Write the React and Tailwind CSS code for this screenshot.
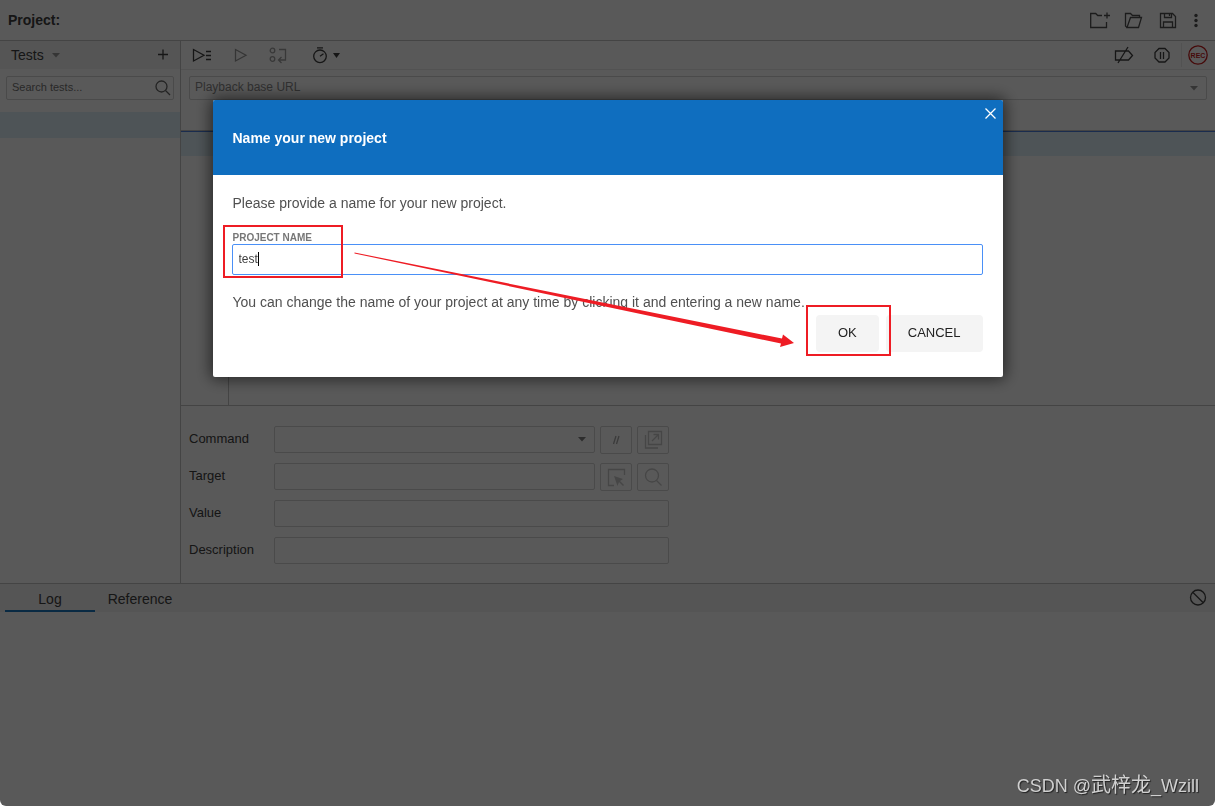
import { useState } from "react";

const FONT = "font-['Liberation_Sans','Noto_Sans_CJK_SC',sans-serif]";

function Icon({ w = 20, h = 20, className = "", children }) {
  return (
    <svg
      width={w}
      height={h}
      viewBox={`0 0 ${w} ${h}`}
      fill="none"
      stroke="currentColor"
      strokeWidth="1.3"
      className={`block shrink-0 ${className}`}
      aria-hidden="true"
    >
      {children}
    </svg>
  );
}

function IconButton({ label, className = "", children }) {
  return (
    <button type="button" aria-label={label} className={`flex shrink-0 items-center justify-center ${className}`}>
      {children}
    </button>
  );
}

function Caret({ className = "" }) {
  return (
    <Icon w={8} h={5} className={className}>
      <path d="M0 0h8L4 4.5z" fill="currentColor" stroke="none" />
    </Icon>
  );
}

function SearchIcon({ className = "" }) {
  return (
    <Icon w={18} h={18} className={className}>
      <circle cx="8.5" cy="7.5" r="5.5" />
      <path d="M12.5 11.500l4.500 4.500" />
    </Icon>
  );
}

function ProjectHeader() {
  return (
    <header className="flex h-[41px] shrink-0 items-center border-b border-[#c4c4c4] pl-2 pr-[9px]">
      <h1 className="flex-1 text-sm font-bold text-[#404040]">Project:</h1>
      <div className="flex items-center text-[#505050]">
        <IconButton label="Create new project" className="w-5">
          <Icon>
            <path d="M16.500 12v5.500H0.700v-14h5l2 2H12" />
            <path d="M14 5.500h6M17 2.500v6" />
          </Icon>
        </IconButton>
        <IconButton label="Open project" className="ml-[14px] w-5">
          <Icon>
            <path d="M3 17.500L1.500 16V3.500h5l2 2h7v2" />
            <path d="M3 17.500h11.500l3-10H6.500z" />
          </Icon>
        </IconButton>
        <IconButton label="Save project" className="ml-[14px] w-5">
          <Icon>
            <path d="M2.500 3.500h12l3 3v11h-15z" />
            <path d="M6.500 3.500v4h7v-4M11.500 4v2M5.500 17.500v-5.500h9v5.500" />
          </Icon>
        </IconButton>
        <IconButton label="More options" className="ml-2 w-5">
          <Icon>
            <g fill="currentColor" stroke="none">
              <circle cx="10" cy="5.500" r="1.700" />
              <circle cx="10" cy="10.500" r="1.700" />
              <circle cx="10" cy="15.500" r="1.700" />
            </g>
          </Icon>
        </IconButton>
      </div>
    </header>
  );
}

function Sidebar() {
  return (
    <aside className="flex w-[181px] shrink-0 flex-col border-r border-[#c4c4c4]">
      <div className="flex h-7 items-center bg-[#f2f2f2] pl-[11px] pr-2">
        <button type="button" className="flex items-center gap-2 text-sm text-[#404040]">
          Tests
          <Caret className="text-[#999]" />
        </button>
        <IconButton label="Add new test" className="ml-auto text-[#404040]">
          <Icon w={18} h={18}>
            <path d="M4 8.500h10M9 3.500v10" />
          </Icon>
        </IconButton>
      </div>
      <label className="mx-[6px] mt-[7px] flex h-6 items-center rounded-xs border border-[#d4d4d4] pl-[5px] pr-[2px]">
        <input
          type="text"
          aria-label="Search tests"
          placeholder="Search tests..."
          className="min-w-0 flex-1 pb-[2px] text-[11px] outline-none placeholder:text-[#757575]"
        />
        <SearchIcon className="text-[#666]" />
      </label>
      <div className="mt-3 h-[26px] bg-[#dff0f8]" />
    </aside>
  );
}

function Toolbar() {
  return (
    <div className="flex h-[29px] shrink-0 items-center border-b border-[#ececec] pl-[11px] pr-[7px] text-[#404040]">
      <IconButton label="Run all tests">
        <Icon>
          <path d="M1.500 4.500v11.500l10.500-5.700z" />
          <path d="M14 6.500h5M14 10.500h5M14 14.500h5" />
        </Icon>
      </IconButton>
      <IconButton label="Run current test" className="ml-[22px] text-[#999]">
        <Icon w={14}>
          <path d="M1.500 4.500v11.500l10.500-5.700z" />
        </Icon>
      </IconButton>
      <IconButton label="Step over" className="ml-[21px] text-[#a0a0a0]">
        <Icon>
          <circle cx="3.500" cy="5.500" r="2.300" />
          <circle cx="3.500" cy="14" r="2.300" />
          <path d="M10 4.500h6.500v10.500H10M12.500 12l-3 3 3 3" />
        </Icon>
      </IconButton>
      <button type="button" aria-label="Test execution speed" className="ml-[22px] flex items-center">
        <Icon>
          <circle cx="9" cy="11.300" r="6.300" />
          <path d="M6 2.800h6M9 11.300l3.500-2.500" />
        </Icon>
        <Icon w={7} h={5} className="ml-[2px]">
          <path d="M0 0h7L3.500 5z" fill="currentColor" stroke="none" />
        </Icon>
      </button>

      <IconButton label="Disable breakpoints" className="ml-auto">
        <Icon>
          <path d="M1.500 6h13l4 4.500-4 4.500h-13zM14 2L4 18" />
        </Icon>
      </IconButton>
      <IconButton label="Pause on exceptions" className="ml-[18px]">
        <Icon>
          <path d="M7 3.500h6l4 4v5.500l-4 4H7l-4-4V7.500z" />
          <path d="M8.500 7v7M11.500 7v7" />
        </Icon>
      </IconButton>
      <IconButton label="Start recording" className="ml-[9px] h-6 border-l border-[#eaeaea] pl-[6px]">
        <Icon className="text-[#c81e1e]">
          <circle cx="10" cy="10" r="9.200" />
          <text
            x="10"
            y="12.500"
            textAnchor="middle"
            fontSize="7"
            fontWeight="bold"
            fill="currentColor"
            stroke="none"
          >
            REC
          </text>
        </Icon>
      </IconButton>
    </div>
  );
}

function FieldRow({ label, id, children }) {
  return (
    <div className="flex h-[27px] w-[480px] max-w-full items-start">
      <label htmlFor={id} className="w-[85px] shrink-0 pt-[5px] text-[13px] leading-4 text-[#404040]">
        {label}
      </label>
      {children}
    </div>
  );
}

const fieldBox = "h-[27px] min-w-0 flex-1 rounded-xs border border-[#d4d4d4] bg-white px-2 text-xs outline-none";
const smallButton = "ml-[5px] h-7 w-8 rounded-xs border border-[#d4d4d4] text-[#c8c8c8]";

function CommandForm() {
  return (
    <form className="flex h-[178px] shrink-0 flex-col gap-[10px] border-t border-[#c4c4c4] pl-2 pt-5">
      <FieldRow label="Command" id="command">
        <div className="relative flex min-w-0 flex-1">
          <select id="command" className={`${fieldBox} appearance-none`} defaultValue="">
            <option value="" />
          </select>
          <Caret className="pointer-events-none absolute right-[9px] top-[11px] text-[#808080]" />
        </div>
        <IconButton label="Enable or disable command" className={smallButton}>
          <Icon className="text-[#a8a8a8]">
            <path d="M10 6L7.500 14M13 6l-2.500 8" />
          </Icon>
        </IconButton>
        <IconButton label="Add new window configuration" className={smallButton}>
          <Icon>
            <path d="M5.500 1.500h13v13h-13zM2.500 5v13H15" />
            <path d="M9 11l6.500-6.500M10.500 4.500h5v5" />
          </Icon>
        </IconButton>
      </FieldRow>
      <FieldRow label="Target" id="target">
        <input id="target" type="text" className={fieldBox} />
        <IconButton label="Select target in page" className={smallButton}>
          <Icon>
            <path d="M8 18.500H2.500v-16h16V8" />
            <path d="M8 9l9 3-3 2 4 4-1 1-4-4-1.500 4z" fill="currentColor" stroke="none" />
          </Icon>
        </IconButton>
        <IconButton label="Find target in page" className={smallButton}>
          <Icon>
            <circle cx="9" cy="8.500" r="6.500" />
            <path d="M13.500 13.500l5 5" />
          </Icon>
        </IconButton>
      </FieldRow>
      <FieldRow label="Value" id="value">
        <input id="value" type="text" className={fieldBox} />
      </FieldRow>
      <FieldRow label="Description" id="description">
        <input id="description" type="text" className={fieldBox} />
      </FieldRow>
    </form>
  );
}

function Editor() {
  return (
    <main className="flex min-w-0 flex-1 flex-col">
      <Toolbar />
      <div className="mx-2 mt-[6px] flex h-6 shrink-0 items-center rounded-xs border border-[#d4d4d4] pl-[5px] pr-2">
        <input
          type="text"
          aria-label="Playback base URL"
          placeholder="Playback base URL"
          className="min-w-0 flex-1 pb-[2px] text-xs outline-none placeholder:text-[#8a8a8a]"
        />
        <Caret className="text-[#999]" />
      </div>
      <div className="mt-[30px] h-[2px] shrink-0 border-t border-[#c4c4c4] bg-[#4a7fe0]" />
      <div className="h-6 shrink-0 bg-[#dff0f8]" />
      <div className="flex flex-1">
        <div className="w-12 border-r border-[#c4c4c4]" />
      </div>
      <CommandForm />
    </main>
  );
}

function Console() {
  return (
    <section className="min-h-[223px] shrink-0 border-t border-[#c4c4c4]">
      <div className="flex h-7 items-stretch bg-[#f2f2f2] pl-[5px] pr-2 text-sm text-[#404040]">
        <button type="button" className="w-[90px] border-b-2 border-[#1c78c0] pt-1">
          Log
        </button>
        <button type="button" className="w-[90px] border-b-2 border-transparent pt-1">
          Reference
        </button>
        <IconButton label="Clear log" className="ml-auto">
          <Icon w={18} h={18}>
            <circle cx="9" cy="8.500" r="7.500" />
            <path d="M4 3.500l10 10" />
          </Icon>
        </IconButton>
      </div>
    </section>
  );
}

function Annotations() {
  return (
    <>
      <div className="pointer-events-none absolute left-[10px] top-[125px] h-[53px] w-[120px] border-2 border-[#ee1c24]" />
      <div className="pointer-events-none absolute left-[593px] top-[205px] h-[51px] w-[85px] border-2 border-[#ee1c24]" />
      <svg
        width="450"
        height="110"
        viewBox="0 0 450 110"
        className="pointer-events-none absolute left-[140px] top-[145px]"
        aria-hidden="true"
      >
        <path d="M1.500 7.500L429 93.500L430 89.500L441 98L427 102L428 98.500L1.500 8.500z" fill="#ee1c24" />
      </svg>
    </>
  );
}

function NameDialog() {
  const [name, setName] = useState("test");

  return (
    <div className="fixed inset-0 flex items-start justify-center rounded-b-md bg-black/65 pt-[100px]">
      <div
        role="dialog"
        aria-modal="true"
        aria-labelledby="dialog-title"
        className="relative w-[790px] max-w-full rounded-xs bg-white shadow-[0_0_16px_2px_rgba(0,0,0,0.6)]"
      >
        <div className="flex h-[75px] items-center rounded-t-xs bg-[#0f6ebf] px-5">
          <h2 id="dialog-title" className="text-sm font-bold text-white">
            Name your new project
          </h2>
          <IconButton label="Close" className="absolute right-1 top-1 text-white">
            <Icon w={18} h={18}>
              <path d="M4.500 4.500l10 10M14.500 4.500l-10 10" />
            </Icon>
          </IconButton>
        </div>
        <form className="px-5 pb-[25px] pt-[18px] text-sm text-[#505050]" onSubmit={(e) => e.preventDefault()}>
          <p>Please provide a name for your new project.</p>
          <label htmlFor="project-name" className="mt-[19px] block text-[10px] font-bold leading-3 text-[#777]">
            PROJECT NAME
          </label>
          <div className="relative -ml-px">
            <input
              id="project-name"
              type="text"
              value={name}
              onChange={(e) => setName(e.target.value)}
              className="block h-[31px] w-full rounded-xs border border-[#4a90f7] px-[6px] pb-[2px] text-xs text-[#404040] outline-none"
            />
            <span className="absolute left-[26px] top-2 h-[14px] w-px bg-black" />
          </div>
          <p className="mt-[17px]">
            You can change the name of your project at any time by clicking it and entering a new name.
          </p>
          <div className="mt-[3px] flex justify-end gap-[7px] text-[13px] text-[#222]">
            <button type="submit" className="h-[37px] rounded-sm bg-[#f4f4f4] px-[22px]">
              OK
            </button>
            <button type="button" className="h-[37px] rounded-sm bg-[#f4f4f4] px-[22px]">
              CANCEL
            </button>
          </div>
        </form>
        <Annotations />
      </div>
    </div>
  );
}

export default function App() {
  return (
    <div className={`flex min-h-screen flex-col bg-white ${FONT}`}>
      <ProjectHeader />
      <div className="flex flex-1">
        <Sidebar />
        <Editor />
      </div>
      <Console />
      <NameDialog />
      <p className="fixed bottom-[6px] right-4 text-lg leading-7 text-[#d0d0d0] [text-shadow:1px_1px_1px_#222]">
        CSDN @<span className="text-xl leading-7">武梓龙</span>_Wzill
      </p>
    </div>
  );
}
